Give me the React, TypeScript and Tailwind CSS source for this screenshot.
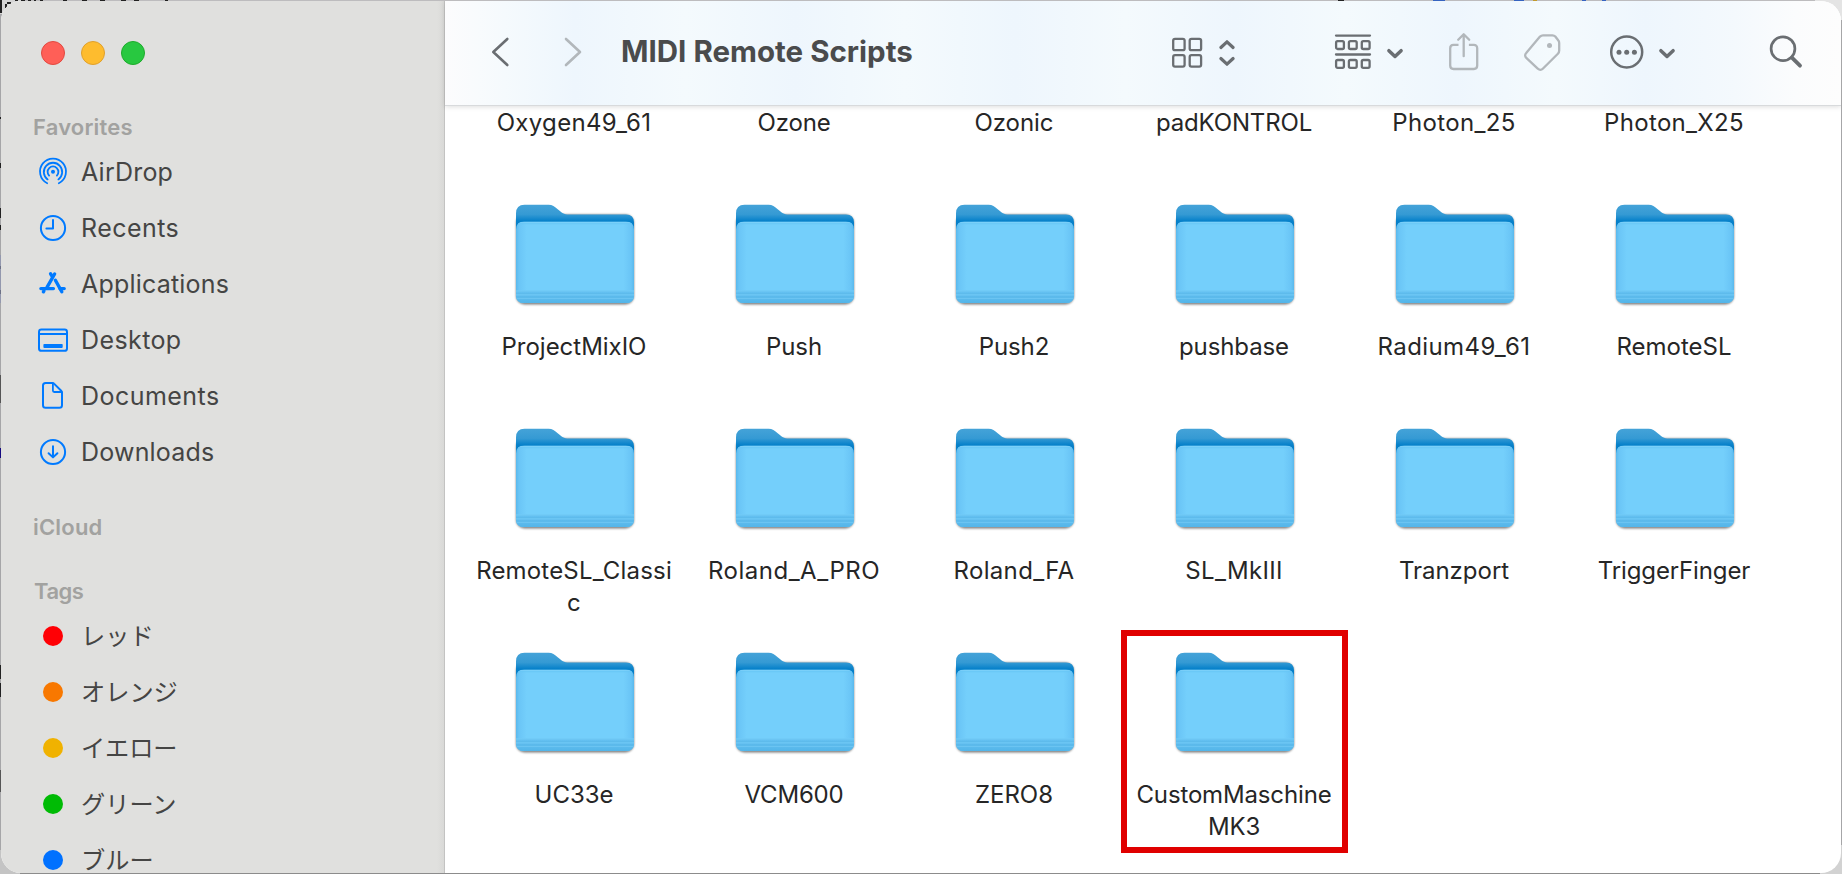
import type { ReactNode } from "react";

type Item = { name: string; icon: ReactNode; tracking: string };
type Folder = { lines: string[]; tracking: string; marked?: boolean };

function SideIcon({ children }: { children: ReactNode }) {
  return (
    <svg
      className="h-8 w-8 shrink-0"
      viewBox="0 0 32 32"
      fill="none"
      stroke="#007aff"
      strokeWidth="2"
      strokeLinecap="round"
      strokeLinejoin="round"
    >
      {children}
    </svg>
  );
}

const favorites: Item[] = [
  {
    name: "AirDrop",
    tracking: "tracking-[0.22px]",
    icon: (
      <SideIcon>
        <g strokeWidth="1.8">
          <path d="M10.2 27.2A13 13 0 1 1 21.8 27.2" />
          <path d="M10.6 23.4A9.2 9.2 0 1 1 21.4 23.4" />
          <path d="M12.1 19.6A5.4 5.4 0 1 1 19.9 19.6" />
        </g>
        <circle cx="16" cy="15.8" r="2" fill="#007aff" stroke="none" />
      </SideIcon>
    ),
  },
  {
    name: "Recents",
    tracking: "tracking-[0.45px]",
    icon: (
      <SideIcon>
        <circle cx="16" cy="16" r="12.1" />
        <path d="M16 8v8.6H9.4" />
      </SideIcon>
    ),
  },
  {
    name: "Applications",
    tracking: "tracking-[0.2px]",
    icon: (
      <SideIcon>
        <g strokeWidth="3.4">
          <path d="M17.6 6L10 19.4" />
          <path d="M13.6 5.8L15.2 8.4" />
          <path d="M18.4 12.2L24.8 23.8" />
          <path d="M3.9 20.6H16.4M23 20.6H27.2" />
          <path d="M6.4 23.8L6.9 23" />
        </g>
      </SideIcon>
    ),
  },
  {
    name: "Desktop",
    tracking: "tracking-[0.4px]",
    icon: (
      <SideIcon>
        <rect x="2" y="5.6" width="28" height="21.2" rx="2.4" />
        <path d="M2.5 10H29.5" strokeWidth="1.8" />
        <rect x="6.4" y="19.9" width="19.3" height="4" rx="0.9" fill="#007aff" stroke="none" />
      </SideIcon>
    ),
  },
  {
    name: "Documents",
    tracking: "tracking-[0.45px]",
    icon: (
      <SideIcon>
        <path d="M8.6 2.9H15.4C16 2.9 16.6 3.1 17 3.6L24.2 10.8C24.7 11.3 25 11.9 25 12.6V25.2C25 26.7 24 27.8 22.4 27.8H8.6C7 27.8 6 26.7 6 25.2V5.5C6 4 7 2.9 8.6 2.9Z" />
        <path d="M15.9 3.4V10.6C15.9 11.4 16.4 12 17.3 12H24.6" strokeWidth="1.8" />
      </SideIcon>
    ),
  },
  {
    name: "Downloads",
    tracking: "tracking-[0.2px]",
    icon: (
      <SideIcon>
        <circle cx="16" cy="16" r="12.1" />
        <path d="M16 10.3V21M11.6 17.2L16 21.4L20.4 17.2" />
      </SideIcon>
    ),
  },
];

const tags = [
  { name: "レッド", dot: "bg-[#ff0005]" },
  { name: "オレンジ", dot: "bg-[#f87800]" },
  { name: "イエロー", dot: "bg-[#f0b200]" },
  { name: "グリーン", dot: "bg-[#00bb05]" },
  { name: "ブルー", dot: "bg-[#0071ff]" },
];

const clippedRow = [
  { name: "Oxygen49_61", tracking: "tracking-[0.32px]" },
  { name: "Ozone", tracking: "tracking-[-0.15px]" },
  { name: "Ozonic", tracking: "tracking-[-0.05px]" },
  { name: "padKONTROL", tracking: "tracking-[-0.16px]" },
  { name: "Photon_25", tracking: "tracking-[0.36px]" },
  { name: "Photon_X25", tracking: "tracking-[0.32px]" },
];

const folders: Folder[] = [
  { lines: ["ProjectMixIO"], tracking: "tracking-[-0.02px]" },
  { lines: ["Push"], tracking: "tracking-[-0.1px]" },
  { lines: ["Push2"], tracking: "tracking-[-0.1px]" },
  { lines: ["pushbase"], tracking: "tracking-[-0.1px]" },
  { lines: ["Radium49_61"], tracking: "tracking-[0.42px]" },
  { lines: ["RemoteSL"], tracking: "tracking-[0px]" },
  { lines: ["RemoteSL_Classi", "c"], tracking: "tracking-[0.18px]" },
  { lines: ["Roland_A_PRO"], tracking: "tracking-[0.5px]" },
  { lines: ["Roland_FA"], tracking: "tracking-[0.33px]" },
  { lines: ["SL_MkIII"], tracking: "tracking-[0.3px]" },
  { lines: ["Tranzport"], tracking: "tracking-[-0.02px]" },
  { lines: ["TriggerFinger"], tracking: "tracking-[-0.12px]" },
  { lines: ["UC33e"], tracking: "tracking-[-0.05px]" },
  { lines: ["VCM600"], tracking: "tracking-[-0.2px]" },
  { lines: ["ZERO8"], tracking: "tracking-[0px]" },
  { lines: ["CustomMaschine", "MK3"], tracking: "tracking-[-0.15px]", marked: true },
];

function FolderDefs() {
  return (
    <svg className="absolute h-0 w-0" aria-hidden="true">
      <defs>
        <linearGradient id="back" x1="0" y1="4" x2="0" y2="24" gradientUnits="userSpaceOnUse">
          <stop offset="0" stopColor="#45a3d8" />
          <stop offset="0.5" stopColor="#359ad4" />
          <stop offset="0.82" stopColor="#0781ca" />
          <stop offset="1" stopColor="#0880c8" />
        </linearGradient>
        <linearGradient id="sides" x1="0" x2="1" y1="0" y2="0">
          <stop offset="0" stopColor="#5ab9ed" />
          <stop offset="0.025" stopColor="#6ac5f6" />
          <stop offset="0.09" stopColor="#74cffb" />
          <stop offset="0.91" stopColor="#74cffb" />
          <stop offset="0.975" stopColor="#6ac5f6" />
          <stop offset="1" stopColor="#5ab9ed" />
        </linearGradient>
        <linearGradient id="foot" x1="0" x2="0" y1="90" y2="103" gradientUnits="userSpaceOnUse">
          <stop offset="0" stopColor="#6ac5f4" />
          <stop offset="0.5" stopColor="#5fbdef" />
          <stop offset="1" stopColor="#52b4e8" />
        </linearGradient>
        <clipPath id="front">
          <path d="M12.5 21H113.500Q122 21 122 29V94.500Q122 102.700 113.500 102.700H12.500Q4 102.700 4 94.500V29Q4 21 12.500 21Z" />
        </clipPath>
        <filter id="soft" x="-10%" y="-10%" width="120%" height="125%">
          <feGaussianBlur stdDeviation="1.1" />
        </filter>
      </defs>
    </svg>
  );
}

function FolderIcon() {
  return (
    <svg className="ml-[2px] h-[108px] w-[126px] shrink-0" viewBox="0 -0.4 126 108">
      <rect x="4" y="14" width="118" height="90" rx="8.500" fill="#000" opacity="0.5" filter="url(#soft)" />
      <path
        d="M4 40V13Q4 4.300 12.500 4.300H36.500C40.500 4.300 42.500 6 46 9C49.500 12 52 14 57 14H114Q122 14 122 22V40Z"
        fill="url(#back)"
      />
      <g clipPath="url(#front)">
        <rect x="4" y="21" width="118" height="82" fill="url(#sides)" />
        <path d="M4 21.500H122" stroke="#8ad6fa" strokeWidth="1.200" />
        <path d="M4 23H122" stroke="#69c6f6" strokeWidth="1.500" opacity="0.7" />
        <rect x="4" y="90" width="118" height="13" fill="url(#foot)" />
        <path d="M4 90.500H122M4 94.500H122M4 98H122" stroke="#7bcff8" strokeWidth="1" opacity="0.55" />
        <path d="M4 92.800H122M4 96.500H122" stroke="#56b3e4" strokeWidth="0.900" opacity="0.7" />
      </g>
    </svg>
  );
}

function ToolIcon({ size, muted, children }: { size: string; muted?: boolean; children: ReactNode }) {
  const width = Number(size);
  return (
    <svg
      className="shrink-0"
      width={width}
      height="40"
      viewBox={`0 0 ${width} 40`}
      fill="none"
      stroke={muted ? "#b2b7bb" : "#6a6e72"}
      strokeWidth="2.3"
      strokeLinecap="round"
      strokeLinejoin="round"
    >
      {children}
    </svg>
  );
}

function ChevronDown() {
  return (
    <ToolIcon size="18">
      <path d="M2.900 18.700L9 24.500L15.100 18.700" strokeWidth="3.500" />
    </ToolIcon>
  );
}

function Toolbar() {
  return (
    <header className="relative z-10 flex h-[105px] shrink-0 items-center border-b border-[#d8dadc] bg-[linear-gradient(90deg,#fcfcfd_0px,#f5fafd_60px,#eef6fd_130px,#f4fafd_240px,#eef6fd_350px,#f4fafd_460px,#eef6fd_570px,#f4fafd_680px,#eef6fd_790px,#f4fafd_900px,#eef6fd_1010px,#f4fafd_1110px,#eef6fd_1200px,#f4f9fd_1290px,#fbfcfd_1350px,#fdfdfd_1396px)] pr-[38px] pb-[3px] pl-[43px] shadow-[0_1px_5px_rgba(0,0,0,0.13)]">
      <ToolIcon size="24">
        <path d="M19.300 7L5.300 20L19.300 33" strokeWidth="2.600" />
      </ToolIcon>
      <span className="ml-[50px] flex">
        <ToolIcon size="24" muted>
          <path d="M4 7L18 20L4 33" strokeWidth="2.600" />
        </ToolIcon>
      </span>
      <h1 className="ml-[35px] pb-px text-[29.5px] leading-[38px] font-bold tracking-[0.01px] whitespace-nowrap text-[#4a4b4c]">
        MIDI Remote Scripts
      </h1>
      <div className="ml-auto flex items-center">
        <ToolIcon size="34">
          <rect x="3.200" y="6.800" width="11.400" height="11.400" rx="1.800" />
          <rect x="19.700" y="6.800" width="11.400" height="11.400" rx="1.800" />
          <rect x="3.200" y="23.200" width="11.400" height="11.400" rx="1.800" />
          <rect x="19.700" y="23.200" width="11.400" height="11.400" rx="1.800" />
        </ToolIcon>
        <span className="ml-[14px] flex">
          <ToolIcon size="18">
            <path d="M2.900 15.500L9 9.800L15.100 15.500M2.900 26.500L9 32.200L15.100 26.500" strokeWidth="3.200" />
          </ToolIcon>
        </span>
        <span className="ml-[97px] flex">
          <ToolIcon size="40">
            <path d="M3 3.600H37M3 22.500H37" />
            <rect x="3.100" y="9.200" width="7.800" height="7.800" rx="1.500" />
            <rect x="15.900" y="9.200" width="7.800" height="7.800" rx="1.500" />
            <rect x="28.800" y="9.200" width="7.800" height="7.800" rx="1.500" />
            <rect x="3.100" y="28" width="7.800" height="7.800" rx="1.500" />
            <rect x="15.900" y="28" width="7.800" height="7.800" rx="1.500" />
            <rect x="28.800" y="28" width="7.800" height="7.800" rx="1.500" />
          </ToolIcon>
        </span>
        <span className="ml-[13px] flex">
          <ChevronDown />
        </span>
        <span className="ml-[43px] flex">
          <ToolIcon size="33" muted>
            <path d="M11.500 12.800H6.500C4.500 12.800 3.200 14.200 3.200 16.200V33.600C3.200 35.600 4.500 37 6.500 37H26.900C28.900 37 30.200 35.600 30.200 33.600V16.200C30.200 14.200 28.900 12.800 26.900 12.800H21.900" strokeLinecap="butt" />
            <path d="M16.700 24.200V2.600M11.200 7.700L16.700 2.200L22.200 7.700" />
          </ToolIcon>
        </span>
        <span className="ml-[42px] flex">
          <ToolIcon size="41" muted>
            <path d="M21 3.300H30.500C31.600 3.300 32.600 3.700 33.300 4.500L36.200 8.300C36.800 9 37.200 9.900 37.200 10.900V18.500C37.200 19.800 36.700 20.900 35.900 21.700L20.800 36.800C19.400 38.200 17.400 38.200 16 36.800L4.300 25.800C2.800 24.400 2.800 22.400 4.200 21L18 4.600C18.800 3.800 19.800 3.300 21 3.300Z" />
            <circle cx="27.500" cy="13.500" r="2.500" fill="#b2b7bb" stroke="none" />
          </ToolIcon>
        </span>
        <span className="ml-[46px] flex">
          <ToolIcon size="36">
            <circle cx="17.700" cy="20" r="15.500" strokeWidth="2.500" />
            <g fill="#6a6e72" stroke="none">
              <circle cx="10" cy="20.200" r="2.500" />
              <circle cx="17.700" cy="20.200" r="2.500" />
              <circle cx="25.400" cy="20.200" r="2.500" />
            </g>
          </ToolIcon>
        </span>
        <span className="ml-[13px] flex">
          <ChevronDown />
        </span>
        <span className="ml-[93px] flex">
          <ToolIcon size="34">
            <circle cx="14" cy="16.700" r="11.900" strokeWidth="2.700" />
            <path d="M22.900 25.600L31 33.700" strokeWidth="3.800" />
          </ToolIcon>
        </span>
      </div>
    </header>
  );
}

function Sidebar() {
  return (
    <aside className="flex w-[444px] shrink-0 flex-col overflow-hidden border-r border-[#c3c3c2] bg-[linear-gradient(90deg,#e0e0de_436px,#d9d9d7_443px)]">
      <div className="mt-[40px] ml-[40px] flex gap-4">
        <span className="h-6 w-6 rounded-full border border-[#e24940] bg-[#ff5f57]" />
        <span className="h-6 w-6 rounded-full border border-[#e0a02c] bg-[#febc2e]" />
        <span className="h-6 w-6 rounded-full border border-[#1eab2c] bg-[#28c840]" />
      </div>
      <h2 className="mt-[45px] ml-[32px] text-[22px] leading-[34px] font-semibold tracking-[0.19px] text-[#a2a2a0]">Favorites</h2>
      <ul>
        {favorites.map((item) => (
          <li key={item.name} className="flex h-14 items-center pl-[36px]">
            {item.icon}
            <span className={`ml-[12px] text-[25px] leading-8 text-[#454544] ${item.tracking}`}>{item.name}</span>
          </li>
        ))}
      </ul>
      <h2 className="mt-[30px] ml-[32px] text-[22px] leading-[34px] font-semibold tracking-[0.2px] text-[#a2a2a0]">iCloud</h2>
      <h2 className="mt-[30px] ml-[33px] text-[22px] leading-[34px] font-semibold tracking-[-0.5px] text-[#a2a2a0]">Tags</h2>
      <ul className="shrink-0">
        {tags.map((tag) => (
          <li key={tag.name} className="flex h-14 items-center pl-[42px]">
            <span className={`h-5 w-5 shrink-0 rounded-full ${tag.dot}`} />
            <span className="ml-[18px] pb-[2px] font-['Noto_Sans_CJK_JP',sans-serif] text-[24.2px] leading-6 text-[#454544]">{tag.name}</span>
          </li>
        ))}
      </ul>
    </aside>
  );
}

function Backdrop() {
  return (
    <svg className="absolute inset-0 h-full w-full" viewBox="0 0 1842 874" shapeRendering="crispEdges">
      <rect width="1842" height="874" fill="#a6a6a8" />
      <rect width="1842" height="1" fill="#bdbcbe" />
      <rect x="1815" width="27" height="20" fill="#e4e4e4" />
      <rect y="850" width="22" height="24" fill="#c4c4c4" />
      <rect x="1815" y="845" width="27" height="29" fill="#d2d2d2" />
      <rect y="873" x="20" width="1800" height="1" fill="#8c8c8c" />
      <rect width="22" height="14" fill="#d5d5d5" />
      <g fill="#222">
        <path d="M0 0h2v13h-2zM5 4h2v4h-2zM7 2h4v2h-4zM15 0h3v1h-3zM21 0h4v1h-4zM28 0h3v1h-3zM34 0h2v1h-2zM40 0h3v1h-3zM63 0h4v1h-4zM82 0h5v1h-5zM100 0h5v1h-5zM121 0h5v1h-5zM134 0h5v1h-5zM165 0h3v1h-3z" />
        <path d="M0 117h1v2h-1zM0 163h1v5h-1zM0 208h1v10h-1zM0 225h1v5h-1zM0 266h1v3h-1zM0 290h1v4h-1zM0 665h1v14h-1zM0 683h1v14h-1zM1338 0h6v1h-6z" />
      </g>
      <path d="M0 375h1v28h-1zM0 770h1v22h-1z" fill="#555" />
      <path d="M0 448h1v10h-1z" fill="#160a80" />
      <path d="M0 255h1v48h-1z" fill="#8c93b0" opacity="0.7" />
      <path d="M1433 0h12v1h-12zM1514 0h10v1h-10zM1582 0h4v1h-4zM1602 0h4v1h-4z" fill="#3563c0" />
      <path d="M1533 0h4v1h-4z" fill="#c29a2a" />
    </svg>
  );
}

export default function App() {
  return (
    <div className="relative flex h-[874px] w-[1842px] overflow-hidden p-px font-['Inter','Noto_Sans_CJK_JP',sans-serif]">
      <Backdrop />
      <FolderDefs />
      <div className="relative flex min-w-0 flex-1 overflow-hidden rounded-[20px] bg-white">
        <Sidebar />
        <main className="flex min-w-0 flex-1 flex-col">
          <Toolbar />
          <div className="min-h-0 flex-1 overflow-hidden pl-[19px]">
            <div className="grid h-[74px] grid-cols-[repeat(6,220px)] pt-px">
              {clippedRow.map((entry) => (
                <p key={entry.name} className={`text-center text-[24px] leading-8 text-[#262626] ${entry.tracking}`}>
                  {entry.name}
                </p>
              ))}
            </div>
            <div className="grid grid-cols-[repeat(6,220px)]">
              {folders.map((folder) => (
                <figure key={folder.lines[0]} className="relative flex h-[224px] flex-col items-center pt-5">
                  <FolderIcon />
                  <figcaption className={`mt-[23px] text-center text-[24px] leading-8 text-[#262626] ${folder.tracking}`}>
                    {folder.lines.map((line) => (
                      <span key={line} className="block whitespace-nowrap">
                        {line}
                      </span>
                    ))}
                  </figcaption>
                  {folder.marked && (
                    <span className="absolute top-[2px] -left-[3px] h-[223px] w-[227px] border-[6px] border-[#e00000]" />
                  )}
                </figure>
              ))}
            </div>
          </div>
        </main>
      </div>
    </div>
  );
}
